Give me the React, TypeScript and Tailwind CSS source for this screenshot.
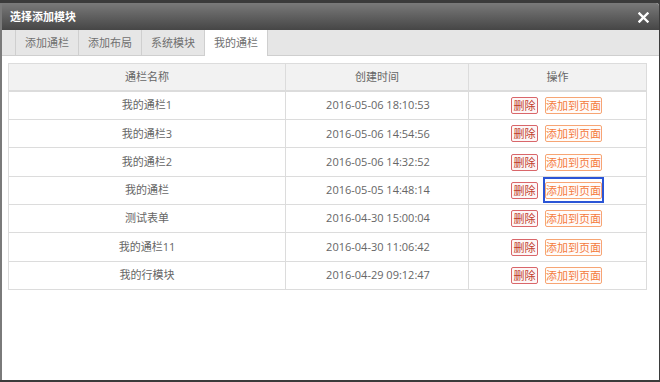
import React from 'react';

const ROWS = [
  { name: '我的通栏1', time: '2016-05-06 18:10:53' },
  { name: '我的通栏3', time: '2016-05-06 14:54:56' },
  { name: '我的通栏2', time: '2016-05-06 14:32:52' },
  { name: '我的通栏', time: '2016-05-05 14:48:14', focused: true },
  { name: '测试表单', time: '2016-04-30 15:00:04' },
  { name: '我的通栏11', time: '2016-04-30 11:06:42' },
  { name: '我的行模块', time: '2016-04-29 09:12:47' }
];

const TABS = ['添加通栏', '添加布局', '系统模块', '我的通栏'];

export default function App() {
  return (
    <div
      className="w-[660px] h-[382px] bg-[#3b3b3b] pt-[3px] pr-[1px] pb-[2px] overflow-hidden"
      style={{ fontFamily: '"Open Sans", "Noto Sans CJK SC", sans-serif' }}
    >
      <div className="h-full flex flex-col bg-white border-l-2 border-[#7a7a7a] rounded-tr-[3px] overflow-hidden">
        {/* Header */}
        <div className="h-[27px] shrink-0 flex items-center justify-between pl-[8px] pr-[10px] bg-gradient-to-b from-[#7a7a7a] to-[#464646]">
          <span className="text-[11px] font-bold text-white leading-none">选择添加模块</span>
          <svg width="11" height="11" viewBox="0 0 11 11" className="mt-[1px]">
            <path d="M1.5 1.5 L9.5 9.5 M9.5 1.5 L1.5 9.5" stroke="#fff" strokeWidth="2.4" strokeLinecap="square" />
          </svg>
        </div>

        {/* Tabs */}
        <div className="h-[26px] shrink-0 flex bg-[#e6e6e6] border-b border-[#cfcfcf]">
          <div className="w-[14px] border-r border-[#cfcfcf]" />
          {TABS.map((tab, i) => {
            const active = i === TABS.length - 1;
            return (
              <div
                key={tab}
                className={
                  'w-[63px] -mb-[1px] flex items-center justify-center border-r border-[#cfcfcf] text-[11px] text-[#707070] ' +
                  (active ? 'bg-white' : '')
                }
              >
                {tab}
              </div>
            );
          })}
        </div>

        {/* Table */}
        <div className="pl-[6px] pt-[7px]">
          <table className="w-[639px] h-[227px] border-collapse text-[11px] text-[#666] table-fixed">
            <colgroup>
              <col className="w-[277px]" />
              <col className="w-[183px]" />
              <col />
            </colgroup>
            <thead>
              <tr className="h-[27px] bg-[#f2f2f2]">
                <th className="font-normal border border-[#dcdcdc] border-b-2">通栏名称</th>
                <th className="font-normal border border-[#dcdcdc] border-b-2">创建时间</th>
                <th className="font-normal border border-[#dcdcdc] border-b-2">操作</th>
              </tr>
            </thead>
            <tbody>
              {ROWS.map((row) => (
                <tr key={row.time}>
                  <td className="text-center border border-[#dcdcdc]">{row.name}</td>
                  <td className="text-center border border-[#dcdcdc] text-[11px] pl-[2px]">{row.time}</td>
                  <td className="border border-[#dcdcdc]">
                    <div className="flex items-center justify-center gap-[7px] pr-[2px]">
                      <span className="w-[27px] h-[17px] flex items-center justify-center rounded-[2px] border border-[#d9666a] bg-[#fdf7f7] text-[#c0392b] text-[11px] leading-none">
                        删除
                      </span>
                      <span className="relative w-[57px] h-[17px] flex items-center justify-center rounded-[2px] border border-[#f7a574] bg-[#fffcfa] text-[#f47a3c] text-[11px] leading-none">
                        添加到页面
                        {row.focused && (
                          <span className="absolute -left-[3px] -right-[3px] -top-[6px] -bottom-[5px] border-2 border-[#2b55d6]" />
                        )}
                      </span>
                    </div>
                  </td>
                </tr>
              ))}
            </tbody>
          </table>
        </div>
      </div>
    </div>
  );
}
